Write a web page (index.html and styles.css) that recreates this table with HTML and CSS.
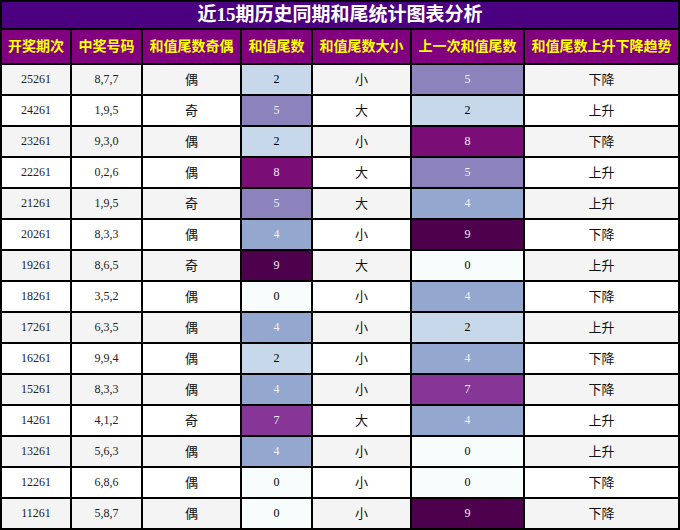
FILE: index.html
```html
<!DOCTYPE html>
<html lang="zh">
<head>
<meta charset="utf-8">
<title>近15期历史同期和尾统计图表分析</title>
<link rel="stylesheet" href="styles.css">
</head>
<body>
<table class="stats">
  <colgroup>
    <col class="c1"><col class="c2"><col class="c3"><col class="c4"><col class="c5"><col class="c6"><col class="c7">
  </colgroup>
  <thead>
    <tr class="title-row"><th colspan="7">近15期历史同期和尾统计图表分析</th></tr>
    <tr class="head-row">
      <th>开奖期次</th><th>中奖号码</th><th>和值尾数奇偶</th><th>和值尾数</th><th>和值尾数大小</th><th>上一次和值尾数</th><th>和值尾数上升下降趋势</th>
    </tr>
  </thead>
  <tbody>
    <tr><td>25261</td><td>8,7,7</td><td class="cn">偶</td><td class="v2">2</td><td class="cn">小</td><td class="v5">5</td><td class="cn">下降</td></tr>
    <tr><td>24261</td><td>1,9,5</td><td class="cn">奇</td><td class="v5">5</td><td class="cn">大</td><td class="v2">2</td><td class="cn">上升</td></tr>
    <tr><td>23261</td><td>9,3,0</td><td class="cn">偶</td><td class="v2">2</td><td class="cn">小</td><td class="v8">8</td><td class="cn">下降</td></tr>
    <tr><td>22261</td><td>0,2,6</td><td class="cn">偶</td><td class="v8">8</td><td class="cn">大</td><td class="v5">5</td><td class="cn">上升</td></tr>
    <tr><td>21261</td><td>1,9,5</td><td class="cn">奇</td><td class="v5">5</td><td class="cn">大</td><td class="v4">4</td><td class="cn">上升</td></tr>
    <tr><td>20261</td><td>8,3,3</td><td class="cn">偶</td><td class="v4">4</td><td class="cn">小</td><td class="v9">9</td><td class="cn">下降</td></tr>
    <tr><td>19261</td><td>8,6,5</td><td class="cn">奇</td><td class="v9">9</td><td class="cn">大</td><td class="v0">0</td><td class="cn">上升</td></tr>
    <tr><td>18261</td><td>3,5,2</td><td class="cn">偶</td><td class="v0">0</td><td class="cn">小</td><td class="v4">4</td><td class="cn">下降</td></tr>
    <tr><td>17261</td><td>6,3,5</td><td class="cn">偶</td><td class="v4">4</td><td class="cn">小</td><td class="v2">2</td><td class="cn">上升</td></tr>
    <tr><td>16261</td><td>9,9,4</td><td class="cn">偶</td><td class="v2">2</td><td class="cn">小</td><td class="v4">4</td><td class="cn">下降</td></tr>
    <tr><td>15261</td><td>8,3,3</td><td class="cn">偶</td><td class="v4">4</td><td class="cn">小</td><td class="v7">7</td><td class="cn">下降</td></tr>
    <tr><td>14261</td><td>4,1,2</td><td class="cn">奇</td><td class="v7">7</td><td class="cn">大</td><td class="v4">4</td><td class="cn">上升</td></tr>
    <tr><td>13261</td><td>5,6,3</td><td class="cn">偶</td><td class="v4">4</td><td class="cn">小</td><td class="v0">0</td><td class="cn">上升</td></tr>
    <tr><td>12261</td><td>6,8,6</td><td class="cn">偶</td><td class="v0">0</td><td class="cn">小</td><td class="v0">0</td><td class="cn">下降</td></tr>
    <tr><td>11261</td><td>5,8,7</td><td class="cn">偶</td><td class="v0">0</td><td class="cn">小</td><td class="v9">9</td><td class="cn">下降</td></tr>
  </tbody>
</table>
</body>
</html>
```
FILE: styles.css
```css
html, body {
  margin: 0;
  padding: 0;
  background: #ffffff;
}

.stats {
  border-collapse: separate;
  border-spacing: 2px;
  background: #000000;
  table-layout: fixed;
  width: 680px;
  font-family: "Liberation Serif", "Noto Sans CJK SC", serif;
  font-size: 12px;
  color: #222222;
}

.c1 { width: 68px; }
.c2 { width: 69px; }
.c3 { width: 97px; }
.c4 { width: 69px; }
.c5 { width: 97px; }
.c6 { width: 111px; }
.c7 { width: 153px; }

.stats th,
.stats td {
  padding: 0;
  text-align: center;
  vertical-align: middle;
  overflow: hidden;
  white-space: nowrap;
}

.title-row th {
  height: 26px;
  background: #4b0082;
  color: #ffffff;
  font-size: 19px;
  font-weight: bold;
  line-height: 26px;
}

.head-row th {
  height: 33px;
  background: #800080;
  color: #ffff00;
  font-size: 14px;
  font-weight: bold;
  line-height: 33px;
}

.stats td {
  height: 29px;
  line-height: 29px;
}

.stats tbody tr:nth-child(odd) td { background: #f4f4f4; }
.stats tbody tr:nth-child(even) td { background: #ffffff; }

.stats td.cn {
  font-size: 13px;
  color: #111111;
}

.stats tbody tr td.v0 { background: #f7fcfd; color: #000000; }
.stats tbody tr td.v2 { background: #c6d8e9; color: #000000; }
.stats tbody tr td.v4 { background: #94a7cf; color: #f1f1f1; }
.stats tbody tr td.v5 { background: #8c83bd; color: #f1f1f1; }
.stats tbody tr td.v7 { background: #863696; color: #f1f1f1; }
.stats tbody tr td.v8 { background: #7b0d77; color: #f1f1f1; }
.stats tbody tr td.v9 { background: #4d004b; color: #f1f1f1; }
```
